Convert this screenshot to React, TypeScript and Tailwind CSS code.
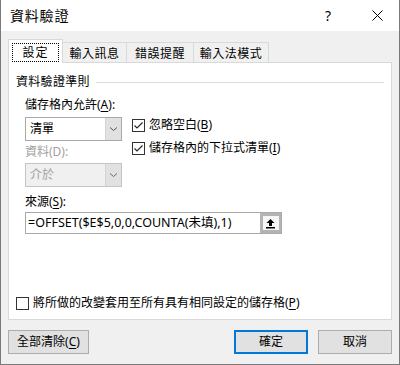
import React from "react";

const FONT = { fontFamily: '"Noto Sans", "Noto Sans CJK TC", sans-serif' };

function U({ children }: { children: React.ReactNode }) {
  return <span className="underline underline-offset-2">{children}</span>;
}

function CheckBox({ checked }: { checked: boolean }) {
  return (
    <span className="w-[13px] h-[13px] border border-[#333333] bg-white flex items-center justify-center shrink-0">
      {checked && (
        <svg width="11" height="11" viewBox="0 0 11 11">
          <path d="M1.5 5.5 L4 8 L9.5 2.5" stroke="#222" strokeWidth="1.1" fill="none" />
        </svg>
      )}
    </span>
  );
}

function Chevron({ color }: { color: string }) {
  return (
    <svg width="9" height="6" viewBox="0 0 9 6">
      <path d="M1 1.5 L4.5 4.5 L8 1.5" stroke={color} strokeWidth="1" fill="none" />
    </svg>
  );
}

export default function App() {
  return (
    <div
      className="w-[400px] h-[365px] bg-[#f0f0f0] border border-t-0 border-[#7a7a7a] flex flex-col text-[12px] text-black overflow-hidden"
      style={FONT}
    >
      {/* Title bar */}
      <div className="h-[31px] bg-white flex items-center pl-[9px] shrink-0">
        <span className="text-[14px] leading-none tracking-[0.8px]">資料驗證</span>
        <span className="ml-auto text-[14px] leading-none mr-[41px]">?</span>
        <svg width="11" height="11" viewBox="0 0 11 11" className="mr-[16px]">
          <path d="M0.5 0.5 L10.5 10.5 M10.5 0.5 L0.5 10.5" stroke="#000" strokeWidth="1" />
        </svg>
      </div>

      {/* Tabs */}
      <div className="flex items-end ml-[7px] h-[32px] shrink-0">
        <div className="relative z-10 w-[55px] h-[24px] bg-white border border-b-0 border-[#d9d9d9] flex items-start justify-center pt-[3px]">
          <span className="w-[47px] h-[19px] border border-dotted border-black flex items-center justify-center leading-none tracking-[1px]">
            設定
          </span>
        </div>
        <div className="w-[64px] h-[21px] pt-px border-t border-r border-[#d9d9d9] flex items-center justify-center leading-none tracking-[0.5px]">
          輸入訊息
        </div>
        <div className="w-[67px] h-[21px] pt-px border-t border-r border-[#d9d9d9] flex items-center justify-center leading-none tracking-[0.5px]">
          錯誤提醒
        </div>
        <div className="w-[75px] h-[21px] pt-px border-t border-r border-[#d9d9d9] flex items-center justify-center leading-none tracking-[0.5px]">
          輸入法模式
        </div>
      </div>

      {/* Panel */}
      <div className="ml-[7px] -mt-px w-[384px] h-[258px] bg-white border border-[#d9d9d9] flex flex-col px-[7px] pt-[11px] pb-[8px] shrink-0">
        <div className="h-[16px] flex items-center">
          <span className="leading-none tracking-[0.3px]">資料驗證準則</span>
          <div className="flex-1 h-px bg-[#dcdcdc] ml-[6px]" />
        </div>

        <div className="pl-[9px] flex flex-col">
          <div className="h-[16px] mt-[7px] flex items-center leading-none">
            儲存格內允許(<U>A</U>):
          </div>
          <div className="flex mt-[4px]">
            <div className="w-[97px] flex flex-col">
              <div className="h-[24px] border border-[#a9a9a9] bg-white flex">
                <div className="flex-1 flex items-center pl-[4px] leading-none">清單</div>
                <div className="w-[16px] bg-[#e1e1e1] border-l border-[#d4d4d4] flex items-center justify-center">
                  <Chevron color="#555" />
                </div>
              </div>
              <div className="h-[16px] mt-[3px] flex items-center leading-none text-[#a0a0a0]">
                資料(D):
              </div>
              <div className="h-[24px] mt-[3px] border border-[#c4c4c4] bg-[#f0f0f0] flex">
                <div className="flex-1 flex items-center pl-[4px] leading-none text-[#a0a0a0]">介於</div>
                <div className="w-[16px] bg-[#e1e1e1] border-l border-[#d4d4d4] flex items-center justify-center">
                  <Chevron color="#6a6a6a" />
                </div>
              </div>
            </div>
            <div className="ml-[10px] flex flex-col">
              <div className="h-[16px] flex items-center gap-[4px] leading-none">
                <CheckBox checked />
                <span>
                  忽略空白(<U>B</U>)
                </span>
              </div>
              <div className="h-[16px] mt-[7px] flex items-center gap-[4px] leading-none">
                <CheckBox checked />
                <span>
                  儲存格內的下拉式清單(<U>I</U>)
                </span>
              </div>
            </div>
          </div>

          <div className="h-[16px] mt-[7px] flex items-center leading-none">
            來源(<U>S</U>):
          </div>
          <div className="w-[257px] h-[22px] mt-[2px] border border-[#a9a9a9] bg-white flex">
            <div className="flex-1 flex items-center pl-[2px] text-[12.5px] leading-none">
              =OFFSET($E$5,0,0,COUNTA(未填),1)
            </div>
            <div className="w-[21px] bg-[#b4b4b4] flex items-center justify-center">
              <div className="w-[16px] h-[14px] bg-[#f6f6f6] flex items-center justify-center">
                <svg width="11" height="11" viewBox="0 0 11 11">
                  <path d="M5.5 1 L1.5 5 H4 V8 H7 V5 H9.5 Z" fill="#000" />
                  <rect x="1" y="9" width="9" height="1.5" fill="#000" />
                </svg>
              </div>
            </div>
          </div>
        </div>

        <div className="mt-auto h-[16px] flex items-center gap-[4px] leading-none">
          <CheckBox checked={false} />
          <span>
            將所做的改變套用至所有具有相同設定的儲存格(<U>P</U>)
          </span>
        </div>
      </div>

      {/* Buttons */}
      <div className="flex mt-[10px] px-[7px] shrink-0">
        <button className="w-[81px] h-[24px] bg-[#e1e1e1] border border-[#adadad] flex items-center justify-center leading-none">
          全部清除(<U>C</U>)
        </button>
        <button className="ml-auto w-[74px] h-[24px] bg-[#e1e1e1] border-2 border-[#0078d7] flex items-center justify-center leading-none">
          確定
        </button>
        <button className="ml-[10px] w-[74px] h-[24px] bg-[#e1e1e1] border border-[#adadad] flex items-center justify-center leading-none">
          取消
        </button>
      </div>
    </div>
  );
}
